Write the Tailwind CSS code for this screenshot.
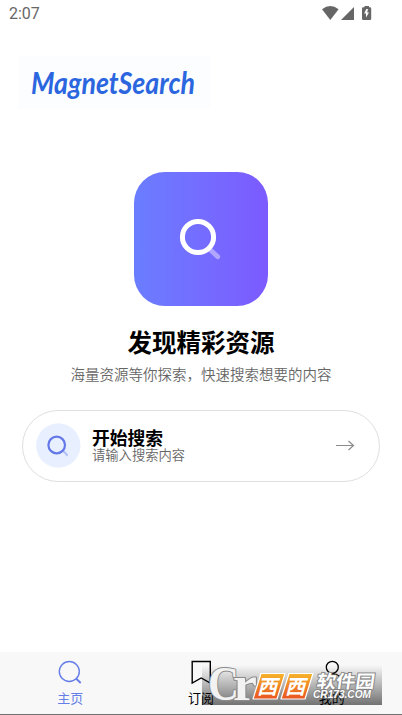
<!DOCTYPE html>
<html lang="zh-CN">
<head>
<meta charset="utf-8">
<meta name="viewport" content="width=device-width, initial-scale=1">
<title>MagnetSearch</title>
<script src="https://cdn.jsdelivr.net/npm/@tailwindcss/browser@4"></script>
</head>
<body class="bg-white font-['Noto_Sans_CJK_SC',sans-serif]">
<div class="relative flex h-[715px] w-[402px] flex-col overflow-hidden bg-white">
  <header class="flex h-[28px] shrink-0 items-center justify-between pl-[9px] pr-[30px] text-[#666]">
    <span class="font-[Roboto,sans-serif] text-[16px] leading-[28px]">2:07</span>
    <svg class="h-[28px] w-[50px]" viewBox="322 0 50 28" fill="#666">
      <path d="M322 9.3Q330.300 2.800 338.600 9.300L330.300 20Z"/>
      <path d="M341 20H354V7Z"/>
      <path d="M364.500 6H369V7.300H370Q371.200 7.300 371.200 8.500V18.800Q371.200 20 370 20H363.200Q362 20 362 18.800V8.500Q362 7.300 363.200 7.300H364.500Z"/>
      <path d="M366.300 9L364.200 13.500H366V17.500L369 12.500H367.200L368 9Z" fill="#fff"/>
    </svg>
  </header>

  <div class="ml-[18px] mt-[28px] h-[53px] w-[192px] shrink-0 bg-[#fbfdff]">
    <svg class="h-full w-full overflow-visible" viewBox="18 56 192 53">
      <text x="31" y="94" textLength="164" lengthAdjust="spacingAndGlyphs" font-family="Lato, sans-serif" font-size="31" font-weight="700" font-style="italic" fill="#2b66df">MagnetSearch</text>
    </svg>
  </div>

  <main class="flex flex-1 flex-col items-center">
    <div class="mt-[63px] h-[134px] w-[134px] shrink-0 rounded-[31px] bg-linear-to-r from-[#6a7dff] to-[#7c5aff]">
      <svg class="h-full w-full" viewBox="134 172 134 134" fill="none">
        <path d="M210.500 250L217.700 256.800" stroke="#b0a5ff" stroke-width="4.800" stroke-linecap="round"/>
        <circle cx="198" cy="237" r="15.600" stroke="#fff" stroke-width="5"/>
      </svg>
    </div>
    <h1 class="mt-[18px] h-[36px] whitespace-nowrap text-[24.500px] font-bold leading-[36px] text-black">发现精彩资源</h1>
    <p class="mt-[3px] h-[22px] whitespace-nowrap text-[14.500px] font-[350] leading-[22px] text-[#666]">海量资源等你探索，快速搜索想要的内容</p>

    <div class="mt-[25px] flex h-[72px] w-[358px] shrink-0 items-center rounded-full border border-[#dfdfdf] pl-[13px] pr-[23px]">
      <svg class="mb-px h-[45px] w-[45px] shrink-0" viewBox="36 423 45 45" fill="none">
        <circle cx="58.300" cy="445.500" r="22.200" fill="#e8f0ff"/>
        <path d="M63 450.500L67 455" stroke="#b3c2fa" stroke-width="2.200" stroke-linecap="round"/>
        <circle cx="56.700" cy="445" r="8.300" stroke="#6478e8" stroke-width="2.200"/>
      </svg>
      <div class="mb-px ml-[11px] flex flex-1 flex-col">
        <strong class="h-[19px] whitespace-nowrap text-[17.800px] font-bold leading-[19px] text-black">开始搜索</strong>
        <span class="h-[16px] whitespace-nowrap text-[13.300px] font-[350] leading-[16px] text-[#666]">请输入搜索内容</span>
      </div>
      <svg class="h-[20px] w-[22px]" viewBox="334 436 22 20" fill="none" stroke="#8b8b8b" stroke-width="1.200">
        <path d="M336 445.500H353.500M348.500 441L353.500 445.500L348.500 450"/>
      </svg>
    </div>
  </main>

  <nav class="flex h-[63px] shrink-0 border-b border-[#707070] bg-[#f8f8f8] px-[5px] text-[13px] leading-[24px]">
    <div class="flex flex-1 flex-col items-center text-[#667ee8]">
      <svg class="mt-[6px] h-[28px] w-[28px]" viewBox="56 658 28 28" fill="none" stroke="currentColor">
        <circle cx="69.300" cy="671.500" r="10" stroke-width="1.400"/>
        <path d="M76 678.500L80.700 683" stroke-width="1.900"/>
      </svg>
      <span>主页</span>
    </div>
    <div class="flex flex-1 flex-col items-center text-black">
      <svg class="mt-[6px] h-[28px] w-[28px]" viewBox="187 658 28 28" fill="none" stroke="currentColor" stroke-width="1.400">
        <path d="M192.200 661.500H210.300V683L201.200 678L192.200 683Z"/>
      </svg>
      <span>订阅</span>
    </div>
    <div class="flex flex-1 flex-col items-center text-black">
      <svg class="mt-[6px] h-[28px] w-[28px]" viewBox="317 658 28 28" fill="none" stroke="currentColor" stroke-width="1.300">
        <circle cx="331.300" cy="667.300" r="6"/>
        <path d="M321 683C322 671 341 671 342 683"/>
      </svg>
      <span>我的</span>
    </div>
  </nav>

  <svg class="absolute left-[202px] top-[660px] h-[50px] w-[180px]" viewBox="202 660 180 50">
    <defs>
      <linearGradient id="shade" x2="0" y2="1"><stop stop-opacity="0"/><stop offset="1" stop-opacity=".54"/></linearGradient>
      <linearGradient id="orange" x2="0" y2="1"><stop stop-color="#f6b52a"/><stop offset="1" stop-color="#e95320"/></linearGradient>
    </defs>
    <rect x="202" y="665" width="180" height="40" fill="url(#shade)"/>
    <g font-family="'Liberation Serif', serif" font-weight="700" fill="#f2f2f2" stroke="#8a8a8a" stroke-width="2" stroke-linejoin="round" paint-order="stroke">
      <text x="208" y="700" font-size="48" textLength="31" lengthAdjust="spacingAndGlyphs">C</text>
      <text x="233" y="700" font-size="49" textLength="24" lengthAdjust="spacingAndGlyphs">r</text>
    </g>
    <path d="M261 673.500H285L277 699H253Z M289 673.500H313L305 699H281Z" fill="url(#orange)" stroke="#fff" stroke-width="1.200" stroke-linejoin="round"/>
    <g font-family="'Noto Sans CJK SC', sans-serif" font-weight="700" fill="#fff">
      <text transform="translate(257 694) skewX(-15)" font-size="20">西</text>
      <text transform="translate(285 694) skewX(-15)" font-size="20">西</text>
      <text transform="translate(316 688) skewX(-8)" font-size="18" textLength="58" lengthAdjust="spacingAndGlyphs" stroke="#858585" stroke-width="1.800" paint-order="stroke">软件园</text>
    </g>
    <text x="313" y="698" font-family="'Liberation Sans', sans-serif" font-size="10" font-weight="700" font-style="italic" textLength="58" lengthAdjust="spacingAndGlyphs" fill="#fff" stroke="#777" stroke-width="1.300" paint-order="stroke">CR173.COM</text>
  </svg>
</div>
</body>
</html>
